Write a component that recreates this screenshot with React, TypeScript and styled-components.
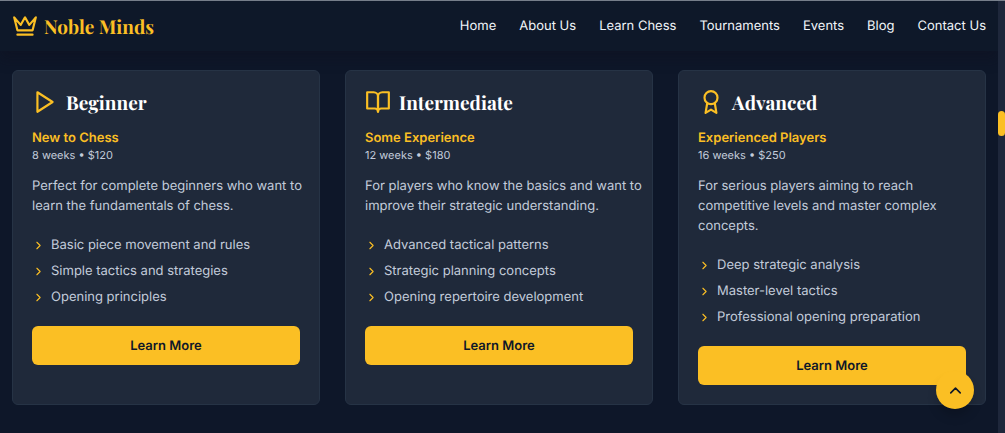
import React from 'react';
import styled, { createGlobalStyle } from 'styled-components';

const color = {
  night: '#0e1729',
  panel: '#1f293a',
  line: '#263345',
  gold: '#fbbf24',
  white: '#ffffff',
  text: '#c3ccda',
  nav: '#f1f5f9',
};

const GlobalStyle = createGlobalStyle`
  *, *::before, *::after { box-sizing: border-box; }
  body {
    margin: 0;
    background: ${color.night};
    color: ${color.text};
    font-family: Inter, "Liberation Sans", sans-serif;
    font-size: 13px;
    line-height: 20px;
    text-rendering: geometricPrecision;
  }
  h1, h2, p, ul { margin: 0; padding: 0; }
  ul { list-style: none; }
`;

const Page = styled.div`
  display: grid;
  grid-template-columns: minmax(0, 1fr) 7px;
  min-height: 100vh;
  border-top: 1px solid #7b838f;
  background: ${color.night};
`;

const Content = styled.div`
  display: flex;
  flex-direction: column;
`;

const Header = styled.header`
  display: flex;
  align-items: center;
  justify-content: space-between;
  height: 50px;
  padding: 0 12px;
  background: #0e1829;
  box-shadow: 0 8px 12px rgba(15, 15, 30, 0.4);
`;

const Brand = styled.a`
  display: flex;
  align-items: center;
  gap: 6px;
  color: ${color.gold};
  font: 700 19px/26px "Playfair Display", "Liberation Serif", serif;
  text-decoration: none;
`;

const Nav = styled.nav`
  display: flex;
  gap: 23px;
`;

const NavLink = styled.a`
  color: ${color.nav};
  text-decoration: none;
`;

const Courses = styled.main`
  display: grid;
  grid-template-columns: repeat(3, minmax(0, 1fr));
  gap: 25px;
  padding: 19px 12px 28px;
`;

const Card = styled.article`
  padding: 18px 19px 19px;
  border: 1px solid ${color.line};
  border-radius: 6px;
  background: ${color.panel};
`;

const CardHead = styled.div`
  display: flex;
  align-items: center;
  gap: 8px;
  margin-bottom: 13px;
  color: ${color.gold};
`;

const CardTitle = styled.h2`
  color: ${color.white};
  font: 700 19px/26px "Playfair Display", "Liberation Serif", serif;
`;

const Audience = styled.p`
  color: ${color.gold};
  font-weight: 600;
`;

const Meta = styled.p`
  font-size: 11px;
  line-height: 14px;
`;

const Description = styled.p`
  margin: 14px -10px 19px 0;
`;

const Topics = styled.ul`
  display: grid;
  gap: 6px;
  margin-bottom: 19px;
`;

const Topic = styled.li`
  display: flex;
  align-items: center;
  gap: 6px;

  svg { color: ${color.gold}; }
`;

const LearnButton = styled.button`
  display: block;
  width: 100%;
  height: 39px;
  padding: 0;
  border: 0;
  border-radius: 6px;
  background: ${color.gold};
  color: ${color.night};
  font: inherit;
  font-weight: 600;
  text-rendering: inherit;
  cursor: pointer;
`;

const TopButton = styled.button`
  position: fixed;
  right: 31px;
  bottom: 24px;
  display: grid;
  place-items: center;
  width: 38px;
  height: 38px;
  padding: 0;
  border: 0;
  border-radius: 50%;
  background: ${color.gold};
  color: ${color.night};
  box-shadow: 0 8px 12px -2px rgba(0, 0, 0, 0.2);
  cursor: pointer;
`;

const ScrollTrack = styled.div`
  padding-top: 110px;
  background: #1e273b;
`;

const ScrollThumb = styled.div`
  height: 25px;
  border-radius: 4px;
  background: ${color.gold};
`;

const Glyph = styled.svg.attrs({
  viewBox: '0 0 24 24',
  fill: 'none',
  stroke: 'currentColor',
  strokeWidth: 2,
  strokeLinecap: 'round',
  strokeLinejoin: 'round',
  'aria-hidden': true,
})<{ $size: number }>`
  flex: none;
  width: ${(p) => p.$size}px;
  height: ${(p) => p.$size}px;
`;

const links = ['Home', 'About Us', 'Learn Chess', 'Tournaments', 'Events', 'Blog', 'Contact Us'];

const courses = [
  {
    title: 'Beginner',
    icon: <polygon points="5 3 19 12 5 21 5 3" />,
    audience: 'New to Chess',
    meta: '8 weeks • $120',
    description: 'Perfect for complete beginners who want to learn the fundamentals of chess.',
    topics: ['Basic piece movement and rules', 'Simple tactics and strategies', 'Opening principles'],
  },
  {
    title: 'Intermediate',
    icon: (
      <>
        <path d="M2 3h6a4 4 0 0 1 4 4v14a3 3 0 0 0-3-3H2z" />
        <path d="M22 3h-6a4 4 0 0 0-4 4v14a3 3 0 0 1 3-3h7z" />
      </>
    ),
    audience: 'Some Experience',
    meta: '12 weeks • $180',
    description: 'For players who know the basics and want to improve their strategic understanding.',
    topics: ['Advanced tactical patterns', 'Strategic planning concepts', 'Opening repertoire development'],
  },
  {
    title: 'Advanced',
    icon: (
      <>
        <circle cx="12" cy="8" r="6" />
        <path d="M15.477 12.89 17 22l-5-3-5 3 1.523-9.11" />
      </>
    ),
    audience: 'Experienced Players',
    meta: '16 weeks • $250',
    description: 'For serious players aiming to reach competitive levels and master complex concepts.',
    topics: ['Deep strategic analysis', 'Master-level tactics', 'Professional opening preparation'],
  },
];

export default function App() {
  return (
    <>
      <GlobalStyle />
      <Page>
        <Content>
          <Header>
            <Brand href="#home">
              <Glyph $size={26}>
                <path d="m2 4 3 12h14l3-12-6 7-4-7-4 7-6-7zm3 16h14" />
              </Glyph>
              Noble Minds
            </Brand>
            <Nav aria-label="Main">
              {links.map((label) => (
                <NavLink key={label} href={`#${label.toLowerCase().replace(' ', '-')}`}>
                  {label}
                </NavLink>
              ))}
            </Nav>
          </Header>
          <Courses>
            {courses.map((course) => (
              <Card key={course.title}>
                <CardHead>
                  <Glyph $size={26}>{course.icon}</Glyph>
                  <CardTitle>{course.title}</CardTitle>
                </CardHead>
                <Audience>{course.audience}</Audience>
                <Meta>{course.meta}</Meta>
                <Description>{course.description}</Description>
                <Topics>
                  {course.topics.map((topic) => (
                    <Topic key={topic}>
                      <Glyph $size={13}>
                        <path d="m9 18 6-6-6-6" />
                      </Glyph>
                      {topic}
                    </Topic>
                  ))}
                </Topics>
                <LearnButton type="button">Learn More</LearnButton>
              </Card>
            ))}
          </Courses>
        </Content>
        <ScrollTrack aria-hidden="true">
          <ScrollThumb />
        </ScrollTrack>
      </Page>
      <TopButton type="button" aria-label="Back to top">
        <Glyph $size={19}>
          <path d="m18 15-6-6-6 6" />
        </Glyph>
      </TopButton>
    </>
  );
}
